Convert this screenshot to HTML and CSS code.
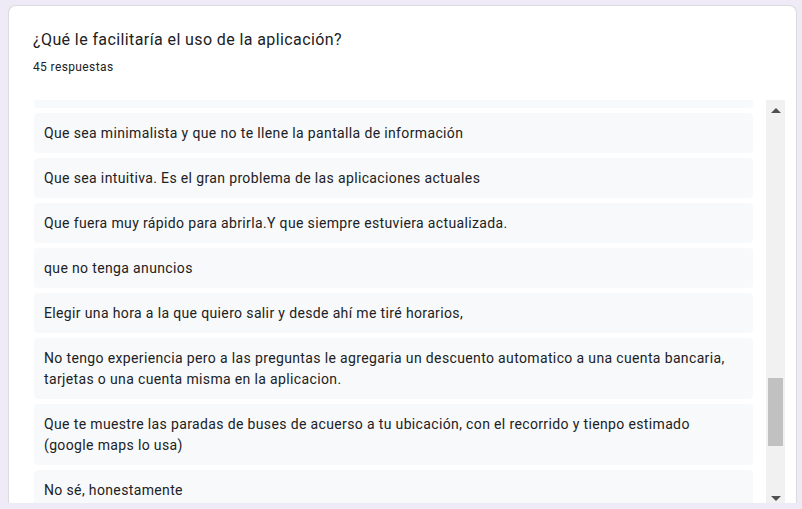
FILE: index.html
```html
<!DOCTYPE html>
<html lang="es">
<head>
<meta charset="utf-8">
<title>Respuestas</title>
<link rel="stylesheet" href="styles.css">
</head>
<body>
<div class="card">
  <div class="title">¿Qué le facilitaría el uso de la aplicación?</div>
  <div class="count">45 respuestas</div>
  <div class="body">
    <div class="list">
      <div class="item item-cut"></div>
      <div class="item">Que sea minimalista y que no te llene la pantalla de información</div>
      <div class="item">Que sea intuitiva. Es el gran problema de las aplicaciones actuales</div>
      <div class="item">Que fuera muy rápido para abrirla.Y que siempre estuviera actualizada.</div>
      <div class="item">que no tenga anuncios</div>
      <div class="item">Elegir una hora a la que quiero salir y desde ahí me tiré horarios,</div>
      <div class="item">No tengo experiencia pero a las preguntas le agregaria un descuento automatico a una cuenta bancaria, tarjetas o una cuenta misma en la aplicacion.</div>
      <div class="item">Que te muestre las paradas de buses de acuerso a tu ubicación, con el recorrido y tienpo estimado (google maps lo usa)</div>
      <div class="item">No sé, honestamente</div>
    </div>
    <div class="scrollbar">
      <div class="arrow arrow-up"></div>
      <div class="thumb"></div>
      <div class="arrow arrow-down"></div>
    </div>
  </div>
</div>
</body>
</html>
```
FILE: styles.css
```css
html, body {
  margin: 0;
  padding: 0;
}
body {
  background: #eeebf7;
  padding: 5px 5px 0 8px;
  height: 509px;
  box-sizing: border-box;
  overflow: hidden;
  font-family: Roboto, "Liberation Sans", Arial, sans-serif;
  color: #202124;
}
.card {
  width: 789px;
  height: 498px;
  box-sizing: border-box;
  background: #ffffff;
  border: 1px solid #dadce0;
  border-bottom: none;
  border-radius: 8px 8px 0 0;
  padding: 22px 11px 0 24px;
  overflow: hidden;
}
.title {
  font-size: 16px;
  line-height: 24px;
  font-weight: 400;
  letter-spacing: 0.4px;
  color: #202124;
}
.count {
  margin-top: 7px;
  font-size: 12px;
  line-height: 16px;
  letter-spacing: 0.38px;
  color: #202124;
}
.body {
  display: flex;
  gap: 13px;
  margin-top: 25px;
  height: 403px;
}
.list {
  flex: 1;
  margin-left: 1px;
  display: flex;
  flex-direction: column;
  gap: 5px;
  overflow: hidden;
}
.item {
  flex: none;
  background: #f8f9fa;
  border-radius: 4px;
  padding: 10px 10px 9px;
  font-size: 14px;
  line-height: 21px;
  letter-spacing: 0.36px;
  color: #202124;
}
.item-cut {
  height: 8px;
  padding: 0;
  border-radius: 0 0 4px 4px;
}
.scrollbar {
  flex: none;
  width: 19px;
  background: #f1f1f1;
  display: flex;
  flex-direction: column;
  align-items: center;
}
.arrow {
  width: 0;
  height: 0;
  border-left: 5px solid transparent;
  border-right: 5px solid transparent;
}
.arrow-up {
  margin-top: 8px;
  border-bottom: 5px solid #505050;
}
.arrow-down {
  margin-top: auto;
  margin-bottom: 2px;
  border-top: 5px solid #505050;
}
.thumb {
  width: 15px;
  height: 68px;
  margin-top: 265px;
  background: #c1c1c1;
}
```
